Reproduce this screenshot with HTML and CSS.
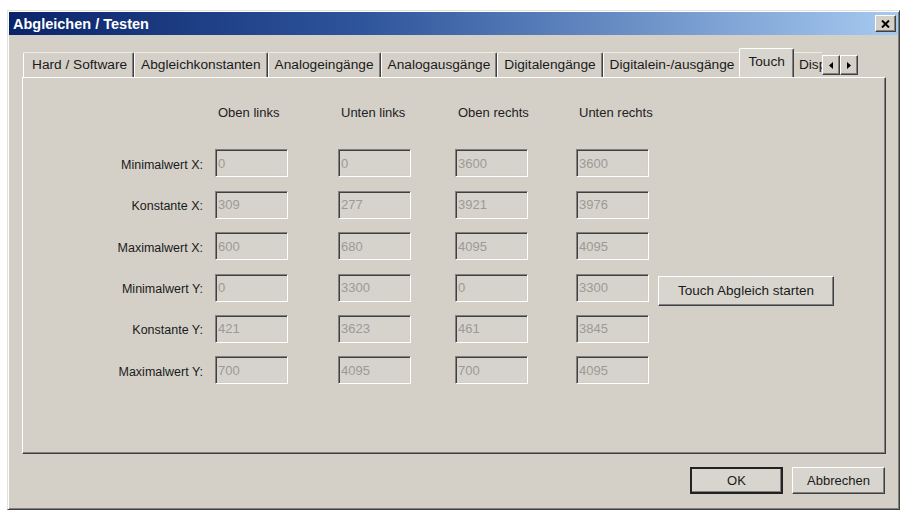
FILE: index.html
```html
<!DOCTYPE html>
<html>
<head>
<meta charset="utf-8">
<title>Abgleichen / Testen</title>
<link rel="stylesheet" href="styles.css">
</head>
<body>

<div class="window">
  <div class="titlebar">
    <span class="title">Abgleichen / Testen</span>
    <span class="close">
      <svg width="9" height="8" viewBox="0 0 9 8"><path d="M1 0.5 L8 7.5 M8 0.5 L1 7.5" stroke="#000" stroke-width="2"/></svg>
    </span>
  </div>

  <div class="client">
    <div class="tabrow">
      <div class="tabs">
        <div class="tab">Hard / Software</div>
        <div class="tab">Abgleichkonstanten</div>
        <div class="tab">Analogeingänge</div>
        <div class="tab">Analogausgänge</div>
        <div class="tab">Digitalengänge</div>
        <div class="tab">Digitalein-/ausgänge</div>
        <div class="tab active">Touch</div>
        <div class="tab">Display</div>
      </div>
      <div class="scroller">
        <span class="arrow"><svg width="4" height="7" viewBox="0 0 4 7"><path d="M4 0 L0 3.5 L4 7 Z" fill="#000"/></svg></span>
        <span class="arrow"><svg width="4" height="7" viewBox="0 0 4 7"><path d="M0 0 L4 3.5 L0 7 Z" fill="#000"/></svg></span>
      </div>
    </div>

    <div class="panel">
      <div class="grid">
        <div></div>
        <div class="colhead">Oben links</div>
        <div class="colhead">Unten links</div>
        <div class="colhead">Oben rechts</div>
        <div class="colhead">Unten rechts</div>
        <div></div>

        <div class="label">Minimalwert X:</div>
        <input class="field" type="text" value="0" disabled>
        <input class="field" type="text" value="0" disabled>
        <input class="field" type="text" value="3600" disabled>
        <input class="field" type="text" value="3600" disabled>
        <div></div>

        <div class="label">Konstante X:</div>
        <input class="field" type="text" value="309" disabled>
        <input class="field" type="text" value="277" disabled>
        <input class="field" type="text" value="3921" disabled>
        <input class="field" type="text" value="3976" disabled>
        <div></div>

        <div class="label">Maximalwert X:</div>
        <input class="field" type="text" value="600" disabled>
        <input class="field" type="text" value="680" disabled>
        <input class="field" type="text" value="4095" disabled>
        <input class="field" type="text" value="4095" disabled>
        <div></div>

        <div class="label">Minimalwert Y:</div>
        <input class="field" type="text" value="0" disabled>
        <input class="field" type="text" value="3300" disabled>
        <input class="field" type="text" value="0" disabled>
        <input class="field" type="text" value="3300" disabled>
        <button class="btn touch">Touch Abgleich starten</button>

        <div class="label">Konstante Y:</div>
        <input class="field" type="text" value="421" disabled>
        <input class="field" type="text" value="3623" disabled>
        <input class="field" type="text" value="461" disabled>
        <input class="field" type="text" value="3845" disabled>
        <div></div>

        <div class="label">Maximalwert Y:</div>
        <input class="field" type="text" value="700" disabled>
        <input class="field" type="text" value="4095" disabled>
        <input class="field" type="text" value="700" disabled>
        <input class="field" type="text" value="4095" disabled>
        <div></div>
      </div>
    </div>

    <div class="actions">
      <button class="btn default">OK</button>
      <button class="btn">Abbrechen</button>
    </div>
  </div>
</div>

</body>
</html>
```

FILE: styles.css
```css
/* Classic Windows dialog: Abgleichen / Testen
*/

body
{ margin: 0;
background-color: #fff;
font-family: "Liberation Sans", Arial, sans-serif;
color: #1a1a1a;
}

div.window
{ margin: 10px 0 0 7px;
width: 893px;
height: 500px;
box-sizing: border-box;
background-color: #d4d0c8;
border: 1px solid;
border-color: #e4e2dc #404040 #404040 #e4e2dc;
box-shadow: inset 1px 1px 0 #fff, inset -1px -1px 0 #808080;
padding: 1px;
}

/* Title bar */

div.titlebar
{ height: 23px;
display: flex;
align-items: center;
justify-content: space-between;
padding: 0 2px 0 4px;
background: linear-gradient(to right, #0a246a 0%, #2f559c 40%, #a6caf0 100%);
}

span.title
{ color: #fff;
font-weight: bold;
font-size: 14.5px;
}

span.close
{ width: 21px;
height: 17px;
box-sizing: border-box;
display: flex;
align-items: center;
justify-content: center;
background-color: #d4d0c8;
border: 1px solid;
border-color: #fff #404040 #404040 #fff;
box-shadow: inset -1px -1px 0 #808080;
}

/* Client area */

div.client
{ padding: 13px 12px 0 13px;
}

div.tabrow
{ display: flex;
align-items: flex-end;
height: 29px;
}

div.tabs
{ flex: 1;
display: flex;
align-items: flex-end;
height: 29px;
overflow: hidden;
padding-left: 1px;
}

div.tab
{ height: 25px;
box-sizing: border-box;
padding: 0 6px;
flex-shrink: 0;
font-size: 13.7px;
line-height: 24px;
white-space: nowrap;
border-top: 1px solid #ecebe7;
border-left: 1px solid #fff;
border-right: 1px solid #404040;
box-shadow: inset -1px 0 0 #808080;
border-radius: 2px 2px 0 0;
}

div.tab:first-child
{ padding-left: 8px;
}

div.tab.active
{ height: 30px;
margin: 0 -2px -1px -2px;
padding: 0 8px;
line-height: 26px;
background-color: #d8d5ce;
border-top-color: #fff;
position: relative;
z-index: 1;
}

div.scroller
{ display: flex;
margin: 0 28px 2px 0;
}

span.arrow
{ width: 18px;
height: 20px;
box-sizing: border-box;
display: flex;
align-items: center;
justify-content: center;
background-color: #d4d0c8;
border: 1px solid;
border-color: #fff #404040 #404040 #fff;
box-shadow: inset -1px -1px 0 #808080;
}

div.panel
{ height: 377px;
box-sizing: border-box;
border: 1px solid;
border-color: #fff #404040 #404040 #fff;
box-shadow: inset -1px -1px 0 #808080;
}

div.grid
{ display: grid;
grid-template-columns: 192px 123px 117px 121px 82px auto;
grid-template-rows: 33px repeat(6, 28px);
row-gap: 13.4px;
padding-top: 25px;
}

div.colhead
{ font-size: 13px;
line-height: 20px;
padding-left: 3px;
align-self: start;
color: #222;
}

div.label
{ font-size: 12.5px;
text-align: right;
padding-right: 12px;
align-self: center;
padding-top: 3px;
}

input.field
{ width: 73px;
height: 28px;
box-sizing: border-box;
margin: 0;
padding: 0 0 0 2px;
font-family: "Liberation Sans", Arial, sans-serif;
font-size: 13px;
color: #9c9a96;
background-color: #d6d3cc;
border: 1px solid;
border-color: #808080 #fff #fff #808080;
box-shadow: inset 1px 1px 0 #404040, inset -1px -1px 0 #d4d0c8;
}

/* Buttons */

button.btn
{ height: 27px;
box-sizing: border-box;
margin: 0;
padding: 0;
font-family: "Liberation Sans", Arial, sans-serif;
font-size: 13px;
color: #1a1a1a;
background-color: #d8d5ce;
border: 1px solid;
border-color: #fff #404040 #404040 #fff;
box-shadow: inset -1px -1px 0 #808080;
}

button.touch
{ width: 176px;
height: 30px;
margin-top: 2px;
font-size: 13.5px;
justify-self: start;
}

button.default
{ border: 2px solid #222;
box-shadow: inset -1px -1px 0 #808080;
}

div.actions
{ display: flex;
justify-content: flex-end;
gap: 9px;
margin-top: 13px;
padding-right: 1px;
}

div.actions button.btn
{ width: 93px;
}
```
